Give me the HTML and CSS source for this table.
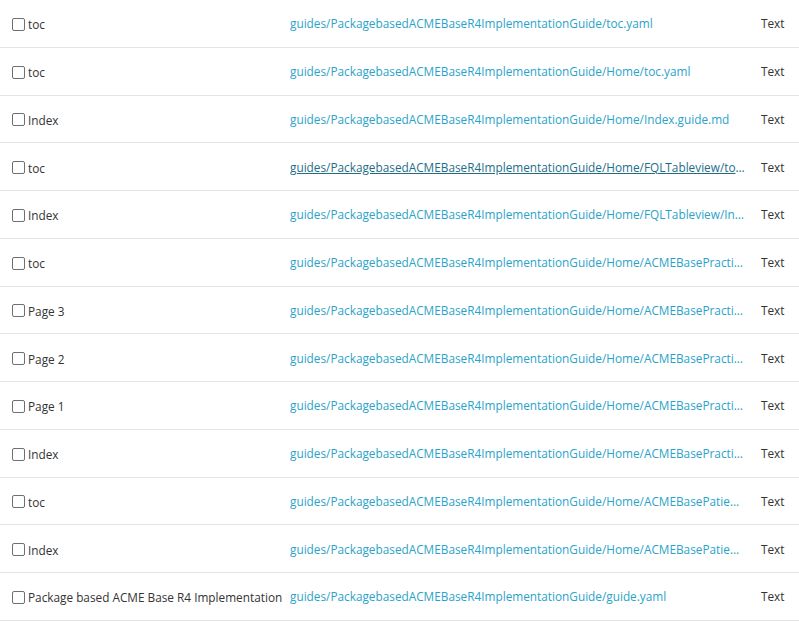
FILE: index.html
```html
<!DOCTYPE html>
<html>
<head>
<meta charset="utf-8">
<link rel="stylesheet" href="styles.css">
</head>
<body>
<div class="list">
  <div class="row">
    <div class="name"><span class="cb"></span><span>toc</span></div>
    <div class="path"><a href="#">guides/PackagebasedACMEBaseR4ImplementationGuide/toc.yaml</a></div>
    <div class="type">Text</div>
  </div>
  <div class="row">
    <div class="name"><span class="cb"></span><span>toc</span></div>
    <div class="path"><a href="#">guides/PackagebasedACMEBaseR4ImplementationGuide/Home/toc.yaml</a></div>
    <div class="type">Text</div>
  </div>
  <div class="row">
    <div class="name"><span class="cb"></span><span>Index</span></div>
    <div class="path"><a href="#">guides/PackagebasedACMEBaseR4ImplementationGuide/Home/Index.guide.md</a></div>
    <div class="type">Text</div>
  </div>
  <div class="row">
    <div class="name"><span class="cb"></span><span>toc</span></div>
    <div class="path"><a href="#" class="hover">guides/PackagebasedACMEBaseR4ImplementationGuide/Home/FQLTableview/toc.yaml</a></div>
    <div class="type">Text</div>
  </div>
  <div class="row">
    <div class="name"><span class="cb"></span><span>Index</span></div>
    <div class="path"><a href="#">guides/PackagebasedACMEBaseR4ImplementationGuide/Home/FQLTableview/Index.guide.md</a></div>
    <div class="type">Text</div>
  </div>
  <div class="row">
    <div class="name"><span class="cb"></span><span>toc</span></div>
    <div class="path"><a href="#">guides/PackagebasedACMEBaseR4ImplementationGuide/Home/ACMEBasePractitioner/toc.yaml</a></div>
    <div class="type">Text</div>
  </div>
  <div class="row">
    <div class="name"><span class="cb"></span><span>Page 3</span></div>
    <div class="path"><a href="#">guides/PackagebasedACMEBaseR4ImplementationGuide/Home/ACMEBasePractitioner/Page3.page.md</a></div>
    <div class="type">Text</div>
  </div>
  <div class="row">
    <div class="name"><span class="cb"></span><span>Page 2</span></div>
    <div class="path"><a href="#">guides/PackagebasedACMEBaseR4ImplementationGuide/Home/ACMEBasePractitioner/Page2.page.md</a></div>
    <div class="type">Text</div>
  </div>
  <div class="row">
    <div class="name"><span class="cb"></span><span>Page 1</span></div>
    <div class="path"><a href="#">guides/PackagebasedACMEBaseR4ImplementationGuide/Home/ACMEBasePractitioner/Page1.page.md</a></div>
    <div class="type">Text</div>
  </div>
  <div class="row">
    <div class="name"><span class="cb"></span><span>Index</span></div>
    <div class="path"><a href="#">guides/PackagebasedACMEBaseR4ImplementationGuide/Home/ACMEBasePractitioner/Index.page.md</a></div>
    <div class="type">Text</div>
  </div>
  <div class="row">
    <div class="name"><span class="cb"></span><span>toc</span></div>
    <div class="path"><a href="#">guides/PackagebasedACMEBaseR4ImplementationGuide/Home/ACMEBasePatient/toc.yaml</a></div>
    <div class="type">Text</div>
  </div>
  <div class="row">
    <div class="name"><span class="cb"></span><span>Index</span></div>
    <div class="path"><a href="#">guides/PackagebasedACMEBaseR4ImplementationGuide/Home/ACMEBasePatient/Index.page.md</a></div>
    <div class="type">Text</div>
  </div>
  <div class="row">
    <div class="name"><span class="cb"></span><span>Package based ACME Base R4 Implementation</span></div>
    <div class="path"><a href="#">guides/PackagebasedACMEBaseR4ImplementationGuide/guide.yaml</a></div>
    <div class="type">Text</div>
  </div>
</div>
</body>
</html>
```
FILE: styles.css
```css
html, body {
  margin: 0;
  padding: 0;
  background: #ffffff;
}
body {
  font-family: "Open Sans", "Noto Sans", sans-serif;
  font-size: 11.8px;
  color: #333333;
  overflow: hidden;
}
.list {
  display: flex;
  flex-direction: column;
}
.row {
  display: grid;
  grid-template-columns: 290px 470px 1fr;
  align-items: center;
  height: 46.75px;
  border-bottom: 1px solid #e4e4e4;
}
.name {
  display: flex;
  align-items: center;
  padding-left: 12px;
  padding-top: 2px;
  white-space: nowrap;
  overflow: hidden;
}
.cb {
  box-sizing: border-box;
  width: 13px;
  height: 13px;
  border: 1.5px solid #6e6e78;
  border-radius: 2px;
  margin-right: 3px;
  flex: none;
}
.path {
  min-width: 0;
  padding-right: 14px;
}
.path a {
  display: block;
  white-space: nowrap;
  overflow: hidden;
  text-overflow: ellipsis;
  color: #2aa3c9;
  text-decoration: none;
}
.path a.hover {
  color: #1e6e88;
  text-decoration: underline;
}
.type {
  white-space: nowrap;
  padding-left: 1px;
}
```
